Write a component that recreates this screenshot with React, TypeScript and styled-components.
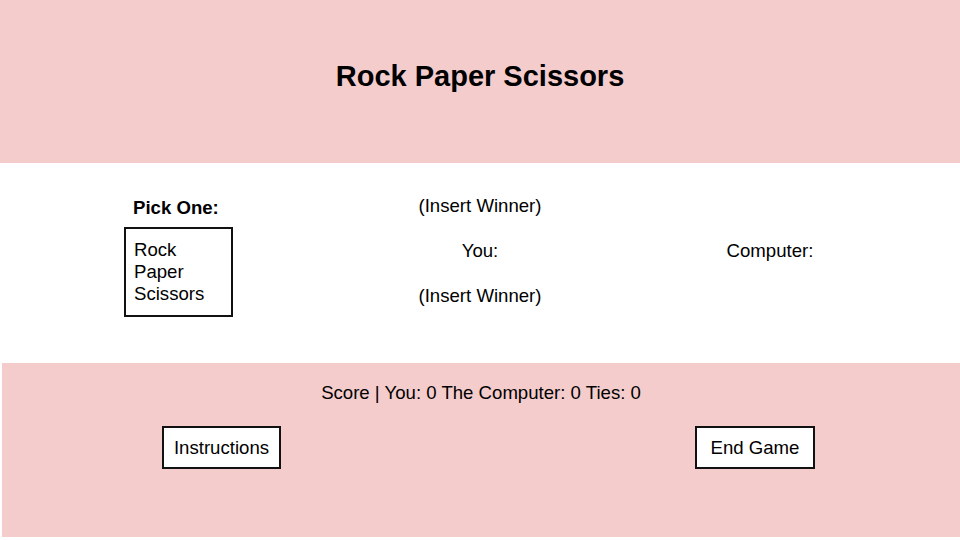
import styled, { createGlobalStyle } from "styled-components";

const GlobalStyle = createGlobalStyle`
  body {
    margin: 0;
    background: #ffffff;
    font-family: "Liberation Sans", Arial, sans-serif;
    color: #000000;
  }
`;

const Page = styled.div`
  width: 960px;
  height: 540px;
  display: flex;
  flex-direction: column;
`;

const Header = styled.header`
  box-sizing: border-box;
  height: 163px;
  padding-top: 59px;
  background: #f4cccc;
  text-align: center;
`;

const Title = styled.h1`
  margin: 0;
  font-size: 29px;
  line-height: 34px;
  font-weight: 700;
`;

const Board = styled.main`
  height: 200px;
  display: grid;
  grid-template-columns: 360px 240px 340px;
`;

const PickColumn = styled.section`
  padding: 34px 0 0 124px;
  display: flex;
  flex-direction: column;
  align-items: flex-start;
  gap: 8px;
`;

const Label = styled.div<{ $bold?: boolean }>`
  font-size: 18.6px;
  line-height: 22px;
  font-weight: ${(p) => (p.$bold ? 700 : 400)};
`;

const PickLabel = styled(Label)`
  padding-left: 9px;
`;

const ChoiceBox = styled.ul`
  box-sizing: border-box;
  width: 109px;
  height: 90px;
  margin: 0;
  padding: 10px 8px 0;
  list-style: none;
  border: 2px solid #111;
  font-size: 18.6px;
  line-height: 22px;
`;

const ResultColumn = styled.section<{ $top: number }>`
  padding-top: ${(p) => p.$top}px;
  display: flex;
  flex-direction: column;
  align-items: center;
  gap: 23px;
`;

const Footer = styled.footer`
  box-sizing: border-box;
  height: 174px;
  margin-left: 2px;
  padding-top: 19px;
  background: #f4cccc;
  display: flex;
  flex-direction: column;
  gap: 22px;
`;

const Score = styled(Label)`
  text-align: center;
`;

const ButtonRow = styled.div`
  display: flex;
  justify-content: space-between;
  padding: 0 145px 0 160px;
`;

const Button = styled.button<{ $width: number }>`
  box-sizing: border-box;
  width: ${(p) => p.$width}px;
  height: 43px;
  padding: 0;
  background: #ffffff;
  border: 2px solid #111;
  border-radius: 0;
  font-family: inherit;
  font-size: 18.6px;
  color: #000;
  cursor: pointer;
`;

export default function App() {
  return (
    <>
      <GlobalStyle />
      <Page>
        <Header>
          <Title>Rock Paper Scissors</Title>
        </Header>
        <Board>
          <PickColumn>
            <PickLabel $bold>Pick One:</PickLabel>
            <ChoiceBox>
              <li>Rock</li>
              <li>Paper</li>
              <li>Scissors</li>
            </ChoiceBox>
          </PickColumn>
          <ResultColumn $top={32}>
            <Label>(Insert Winner)</Label>
            <Label>You:</Label>
            <Label>(Insert Winner)</Label>
          </ResultColumn>
          <ResultColumn $top={77}>
            <Label>Computer:</Label>
          </ResultColumn>
        </Board>
        <Footer>
          <Score>Score | You: 0 The Computer: 0 Ties: 0</Score>
          <ButtonRow>
            <Button $width={119}>Instructions</Button>
            <Button $width={120}>End Game</Button>
          </ButtonRow>
        </Footer>
      </Page>
    </>
  );
}
